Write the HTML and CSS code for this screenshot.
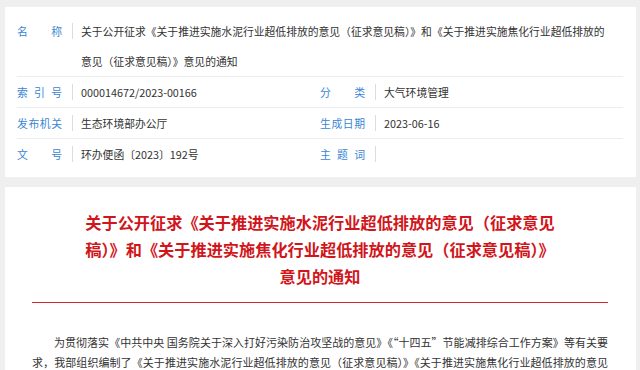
FILE: index.html
```html
<!DOCTYPE html>
<html lang="zh-CN">
<head>
<meta charset="utf-8">
<title>关于公开征求意见的通知</title>
<link rel="stylesheet" href="styles.css">
</head>
<body>
<div class="page">
  <section class="card meta">
    <div class="row">
      <div class="cell wide">
        <span class="label">名称</span>
        <span class="sep"></span>
        <span class="value">关于公开征求《关于推进实施水泥行业超低排放的意见（征求意见稿）》和《关于推进实施焦化行业超低排放的意见（征求意见稿）》意见的通知</span>
      </div>
    </div>
    <div class="row">
      <div class="cell">
        <span class="label">索引号</span>
        <span class="sep"></span>
        <span class="value">000014672/2023-00166</span>
      </div>
      <div class="cell">
        <span class="label">分类</span>
        <span class="sep"></span>
        <span class="value">大气环境管理</span>
      </div>
    </div>
    <div class="row">
      <div class="cell">
        <span class="label">发布机关</span>
        <span class="sep"></span>
        <span class="value">生态环境部办公厅</span>
      </div>
      <div class="cell">
        <span class="label">生成日期</span>
        <span class="sep"></span>
        <span class="value">2023-06-16</span>
      </div>
    </div>
    <div class="row last">
      <div class="cell">
        <span class="label">文号</span>
        <span class="sep"></span>
        <span class="value">环办便函〔2023〕192号</span>
      </div>
      <div class="cell">
        <span class="label">主题词</span>
        <span class="sep"></span>
        <span class="value"></span>
      </div>
    </div>
  </section>

  <section class="card article">
    <h1 class="title">关于公开征求《关于推进实施水泥行业超低排放的意见（征求意见稿）》和《关于推进实施焦化行业超低排放的意见（征求意见稿）》意见的通知</h1>
    <div class="rule"></div>
    <p class="para">为贯彻落实《中共中央 国务院关于深入打好污染防治攻坚战的意见》《“十四五”节能减排综合工作方案》等有关要求，我部组织编制了《关于推进实施水泥行业超低排放的意见（征求意见稿）》《关于推进实施焦化行业超低排放的意见（征求意见稿）》（见附件），现公开征求意见。</p>
  </section>
</div>
</body>
</html>
```

FILE: styles.css
```css
html, body {
  margin: 0;
  padding: 0;
}
body {
  background: #efefef;
  font-family: "Noto Sans CJK SC", "Noto Sans", "Liberation Sans", sans-serif;
  color: #333;
  text-spacing-trim: normal;
  overflow: hidden;
}
.page {
  padding: 7px 4px 0 5px;
}
.card {
  background: #fff;
}
.meta {
  padding: 9px 13px 8px 12px;
}
.row {
  display: grid;
  grid-template-columns: 1fr 1fr;
  border-bottom: 1px solid #ececec;
}
.row.last {
  border-bottom: none;
}
.cell {
  display: flex;
  align-items: flex-start;
  font-size: 10.8px;
  line-height: 30px;
  min-width: 0;
}
.cell.wide {
  grid-column: 1 / span 2;
  padding-right: 13px;
}
.label {
  flex: 0 0 45px;
  color: #3a86d2;
  text-align: justify;
  text-align-last: justify;
}
.sep {
  flex: 0 0 auto;
  width: 1px;
  height: 16px;
  margin: 7px 8px 0 10px;
  background: #dcdcdc;
}
.value {
  flex: 1;
  color: #333;
}
.article {
  margin-top: 10px;
  padding: 22px 28px 20px 27px;
}
.title {
  margin: 0 auto;
  max-width: 478px;
  font-size: 16.2px;
  line-height: 27px;
  font-weight: bold;
  color: #d0161b;
  text-align: center;
}
.rule {
  margin-top: 12px;
  height: 1px;
  background: #d6262b;
}
.para {
  margin: 29px 0 0;
  font-size: 11px;
  line-height: 20px;
  text-indent: 2em;
  text-align: justify;
  color: #333;
}
```
